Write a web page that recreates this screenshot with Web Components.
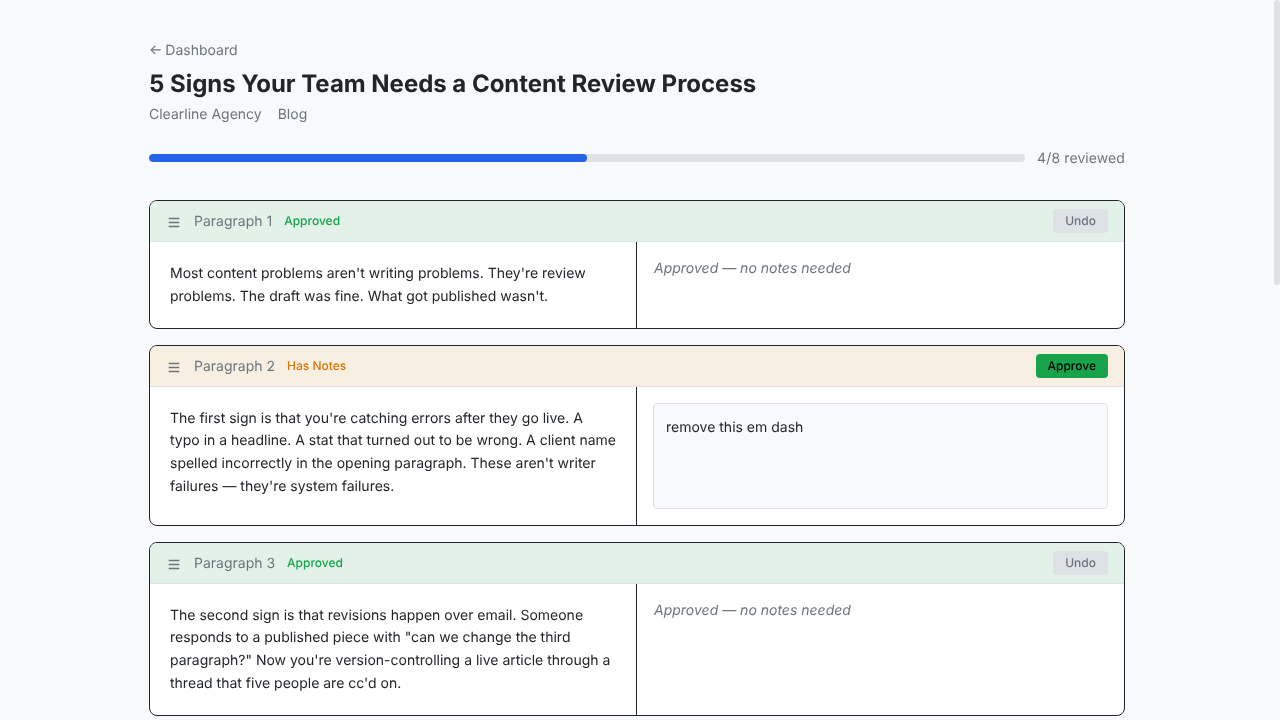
<!DOCTYPE html>
<html lang="en">
<head>
<meta charset="utf-8">
<title>Content Review</title>
<style>
  html, body { height: 100%; }
  body {
    margin: 0;
    overflow: hidden;
    background: #f8f9fa;
    color: #212529;
    font-family: Inter, "Liberation Sans", sans-serif;
    text-rendering: geometricPrecision;
  }
</style>
</head>
<body>
<review-page>
  <review-header slot="header"
    title="5 Signs Your Team Needs a Content Review Process"
    client="Clearline Agency" type="Blog" done="4" total="8"></review-header>

  <review-card number="1" status="approved">
    Most content problems aren't writing problems. They're review problems. The draft was fine. What got published wasn't.
  </review-card>
  <review-card number="2" status="notes" note="remove this em dash">
    The first sign is that you're catching errors after they go live. A typo in a headline. A stat that turned out to be wrong. A client name spelled incorrectly in the opening paragraph. These aren't writer failures — they're system failures.
  </review-card>
  <review-card number="3" status="approved">
    The second sign is that revisions happen over email. Someone responds to a published piece with "can we change the third paragraph?" Now you're version-controlling a live article through a thread that five people are cc'd on.
  </review-card>
</review-page>

<script>
class ReviewPage extends HTMLElement {
  constructor() {
    super();
    this.attachShadow({ mode: 'open' });
  }

  connectedCallback() {
    this.shadowRoot.innerHTML = `
      <style>
        :host { display: flex; height: 100vh; }
        .scroller {
          flex: 1;
          min-width: 0;
          overflow: hidden;
          will-change: transform;
        }
        .content {
          max-width: 976px;
          margin: 0 auto;
          padding: 40px 0 32px;
        }
        .cards {
          display: flex;
          flex-direction: column;
          gap: 16px;
        }
        .rail { width: 6px; flex: none; }
        .thumb {
          height: 285px;
          border-radius: 3px;
          background: #dee2e6;
        }
      </style>
      <div class="scroller">
        <div class="content">
          <slot name="header"></slot>
          <div class="cards"><slot></slot></div>
        </div>
      </div>
      <div class="rail"><div class="thumb"></div></div>
    `;
  }
}

// Back link, title, meta and progress bar
class ReviewHeader extends HTMLElement {
  constructor() {
    super();
    this.attachShadow({ mode: 'open' });
  }

  connectedCallback() {
    const done = Number(this.getAttribute('done'));
    const total = Number(this.getAttribute('total'));
    this.shadowRoot.innerHTML = `
      <style>
        :host { display: block; margin-bottom: 30.2px; }
        .back {
          display: block;
          font-size: 14px;
          line-height: 22px;
          word-spacing: -1px;
          color: #6c757d;
          text-decoration: none;
          margin-bottom: 6px;
        }
        h1 {
          margin: 0 0 5px;
          font-size: 24px;
          line-height: 31px;
          font-weight: 700;
          letter-spacing: -0.02px;
          color: #212529;
        }
        .meta {
          display: flex;
          gap: 16px;
          font-size: 14px;
          line-height: 22px;
          color: #6c757d;
          margin-bottom: 20px;
        }
        .progress {
          display: flex;
          align-items: center;
          gap: 12px;
        }
        .track {
          flex: 1;
          height: 8px;
          border-radius: 4px;
          background: #dee2e6;
          overflow: hidden;
        }
        .fill {
          height: 100%;
          border-radius: 4px;
          background: #2563eb;
        }
        .count {
          padding-top: 2px;
          font-size: 14px;
          line-height: 22px;
          letter-spacing: 0.08px;
          font-variant-numeric: tabular-nums;
          color: #6c757d;
          white-space: nowrap;
        }
      </style>
      <a class="back" href="#">← Dashboard</a>
      <h1>${this.getAttribute('title')}</h1>
      <div class="meta">
        <span>${this.getAttribute('client')}</span>
        <span>${this.getAttribute('type')}</span>
      </div>
      <div class="progress">
        <div class="track"><div class="fill" style="width:${done / total * 100}%"></div></div>
        <span class="count">${done}/${total} reviewed</span>
      </div>
    `;
  }
}

// One paragraph with its review state
class ReviewCard extends HTMLElement {
  constructor() {
    super();
    this.attachShadow({ mode: 'open' });
  }

  connectedCallback() {
    const approved = this.getAttribute('status') === 'approved';
    const note = this.getAttribute('note') || '';
    this.shadowRoot.innerHTML = `
      <style>
        :host { display: block; }
        .card {
          background: #fff;
          border: 1px solid #212529;
          border-radius: 8px;
          overflow: hidden;
        }
        .head {
          box-sizing: border-box;
          display: flex;
          align-items: center;
          gap: 12px;
          height: 41px;
          padding: 1px 16px 0;
          border-bottom: 1px solid #dee2e6;
          background: ${approved ? '#e2f2e9' : '#f7efe2'};
        }
        .handle { width: 16px; height: 16px; flex: none; margin-top: 1px; }
        .label { font-size: 14px; line-height: 17px; color: #6c757d; }
        .status {
          font-size: 12px;
          line-height: 15px;
          font-weight: 500;
          margin-bottom: 2px;
          color: ${approved ? '#16a34a' : '#d97706'};
        }
        button {
          margin: -1px 0 0 auto;
          font: 500 12px/15px Inter, "Liberation Sans", sans-serif;
          height: 24px;
          padding: 0 12px 1px;
          border: none;
          border-radius: 4px;
          cursor: pointer;
          text-rendering: geometricPrecision;
        }
        .undo { background: #dee2e6; color: #6c757d; }
        .approve { background: #16a34a; color: #000; }
        .body {
          display: grid;
          grid-template-columns: 1fr 1fr;
        }
        .text {
          padding: 21px 20px 19px;
          font-size: 14px;
          line-height: 1.625;
          color: #212529;
          border-right: 1px solid #212529;
        }
        .side { padding: 16px; min-width: 0; }
        .hint {
          padding-left: 1px;
          font-size: 14px;
          line-height: 22px;
          font-style: italic;
          color: #6c757d;
        }
        .note {
          box-sizing: border-box;
          height: 106px;
          padding: 12px;
          font-size: 14px;
          line-height: 24px;
          color: #212529;
          background: #f8f9fa;
          border: 1px solid #dee2e6;
          border-radius: 4px;
        }
      </style>
      <div class="card">
        <div class="head">
          <svg class="handle" viewBox="0 0 16 16" fill="none" stroke="#6c757d" stroke-width="1.3">
            <path d="M2.7 4.5h10.6M2.7 8.5h10.6M2.7 12.5h10.6"/>
          </svg>
          <span class="label">Paragraph ${this.getAttribute('number')}</span>
          <span class="status">${approved ? 'Approved' : 'Has Notes'}</span>
          <button class="${approved ? 'undo' : 'approve'}">${approved ? 'Undo' : 'Approve'}</button>
        </div>
        <div class="body">
          <div class="text"><slot></slot></div>
          <div class="side">
            ${approved
              ? '<div class="hint">Approved — no notes needed</div>'
              : `<div class="note">${note}</div>`}
          </div>
        </div>
      </div>
    `;
  }
}

customElements.define('review-page', ReviewPage);
customElements.define('review-header', ReviewHeader);
customElements.define('review-card', ReviewCard);
</script>
</body>
</html>
